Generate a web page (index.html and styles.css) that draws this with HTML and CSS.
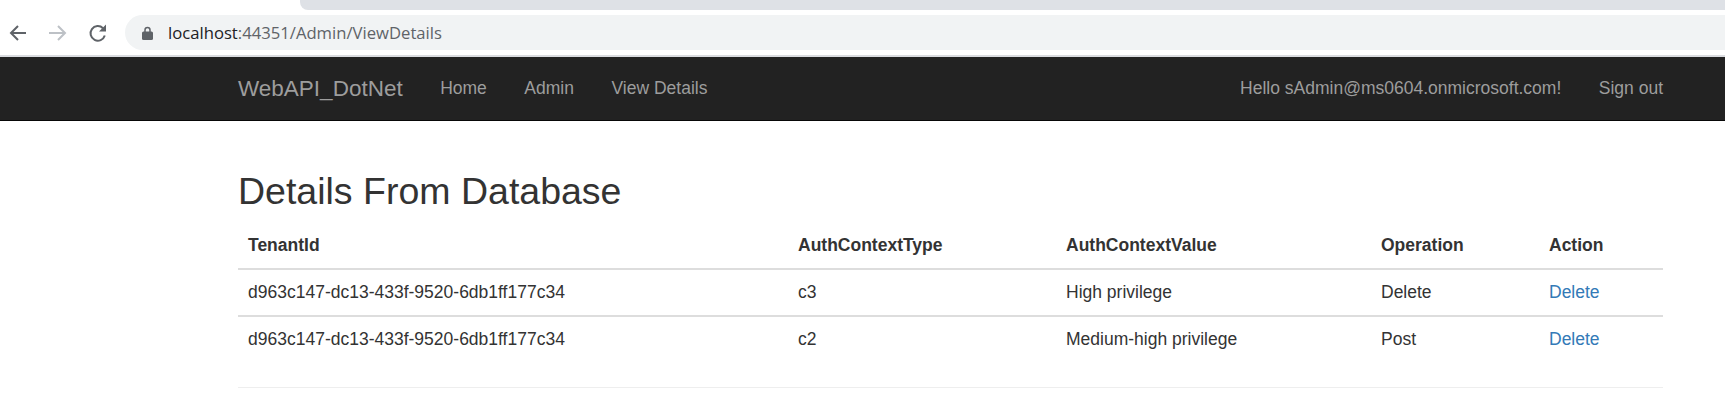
FILE: index.html
```html
<!DOCTYPE html>
<html lang="en">
<head>
<meta charset="utf-8">
<title>View Details</title>
<link rel="stylesheet" href="styles.css">
</head>
<body>
<div class="tabstrip"><div class="tabfill"></div></div>
<div class="toolbar">
  <svg class="tool back" width="20" height="20" viewBox="0 0 20 20"><path d="M18 10H3.500M10 3l-7 7 7 7" fill="none" stroke="#5f6368" stroke-width="2"/></svg>
  <svg class="tool fwd" width="20" height="20" viewBox="0 0 20 20"><path d="M1 10h15.500M10 3l7 7-7 7" fill="none" stroke="#bdc1c6" stroke-width="2"/></svg>
  <svg class="tool reload" width="20" height="20" viewBox="0 0 20 20"><path d="M16.800 12.500A7.300 7.300 0 1 1 15 5.200" fill="none" stroke="#5f6368" stroke-width="2"/><path d="M18 1.500V8.500h-7z" fill="#5f6368"/></svg>
  <div class="omnibox">
    <svg class="lock" width="12" height="14" viewBox="0 0 12 14"><path d="M3 6V4a2.500 2.500 0 0 1 5 0v2" fill="none" stroke="#5f6368" stroke-width="1.500"/><rect x="0" y="5.500" width="11" height="8.500" rx="1.500" fill="#5f6368"/></svg>
    <span class="url"><span class="host">localhost</span>:44351/Admin/ViewDetails</span>
  </div>
</div>
<nav class="navbar">
  <div class="container navrow">
    <a class="brand">WebAPI_DotNet</a>
    <a class="navlink">Home</a>
    <a class="navlink">Admin</a>
    <a class="navlink">View Details</a>
    <span class="navright">
      <a class="navlink">Hello sAdmin@ms0604.onmicrosoft.com!</a>
      <a class="navlink last">Sign out</a>
    </span>
  </div>
</nav>
<main class="container">
  <h2 class="title">Details From Database</h2>
  <table class="table">
    <colgroup><col class="c1"><col class="c2"><col class="c3"><col class="c4"><col class="c5"></colgroup>
    <thead>
      <tr><th>TenantId</th><th>AuthContextType</th><th>AuthContextValue</th><th>Operation</th><th>Action</th></tr>
    </thead>
    <tbody>
      <tr><td>d963c147-dc13-433f-9520-6db1ff177c34</td><td>c3</td><td>High privilege</td><td>Delete</td><td><a class="link">Delete</a></td></tr>
      <tr><td>d963c147-dc13-433f-9520-6db1ff177c34</td><td>c2</td><td>Medium-high privilege</td><td>Post</td><td><a class="link">Delete</a></td></tr>
    </tbody>
  </table>
  <hr class="rule">
</main>
</body>
</html>
```
FILE: styles.css
```css
html, body { margin: 0; padding: 0; background: #fff; overflow: hidden; }
body { font-family: "Liberation Sans", Arial, sans-serif; font-size: 17.5px; color: #333; }
.tabstrip { height: 10px; padding-left: 300px; }
.tabfill { height: 10px; background: #dee1e6; border-bottom-left-radius: 8px; }
.toolbar { height: 45px; display: flex; align-items: center; padding: 5px 0 5px 8px; box-sizing: border-box; background: #fff; }
.tool { flex: none; }
.back { margin-right: 20px; }
.fwd { margin-right: 20px; }
.reload { margin-right: 17px; }
.omnibox { flex: 1; height: 35px; background: #f1f3f4; border-radius: 18px 0 0 18px; display: flex; align-items: center; padding-left: 17px; }
.lock { margin-right: 14px; flex: none; }
.url { font-family: "Open Sans", sans-serif; font-size: 16.660px; color: #5f6368; white-space: nowrap; }
.host { color: #202124; }
.navbar { background: #222; border-top: 2px solid #dadce0; border-bottom: 1px solid #080808; height: 63px; box-sizing: content-box; }
.container { margin: 0 62px 0 238px; }
.navrow { display: flex; align-items: center; height: 63px; color: #9d9d9d; }
.brand { font-size: 22.500px; margin-right: 37.500px; }
.navlink { margin-right: 37.500px; white-space: nowrap; }
.navlink.last { margin-right: 0; }
.navright { margin-left: auto; display: flex; }
.title { font-size: 37.500px; font-weight: 500; line-height: 1.1; margin: 0; padding-top: 50px; color: #333; }
.table { width: 100%; border-collapse: collapse; table-layout: fixed; margin-top: 11px; }
.c1 { width: 550px; } .c2 { width: 268px; } .c3 { width: 315px; } .c4 { width: 168px; }
th { text-align: left; font-weight: 700; padding: 10px; height: 46px; box-sizing: border-box; border-bottom: 2px solid #ddd; color: #333; }
td { padding: 10px; height: 47px; box-sizing: border-box; border-bottom: 2px solid #ddd; }
tbody tr:last-child td { border-bottom-color: transparent; }
.link { color: #337ab7; }
.rule { border: 0; border-top: 1px solid #eee; margin: 23px 0 0; }
```
